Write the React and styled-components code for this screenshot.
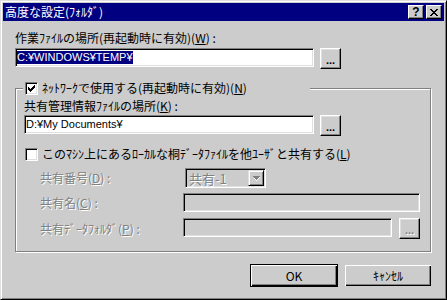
import React from 'react'
import styled, { createGlobalStyle } from 'styled-components'

const GlobalStyle = createGlobalStyle`
  html, body {
    margin: 0;
    padding: 0;
    background: #cccccc;
  }
  body {
    font-family: "Noto Sans CJK JP", "Noto Sans", sans-serif;
    font-size: 12px;
    color: #000;
  }
`

const Window = styled.div`
    box-sizing: border-box;
    width: 447px;
    height: 300px;
    background: #cccccc;
    border: 1px solid;
    border-color: #dfdfdf #000 #000 #dfdfdf;
    box-shadow: inset 1px 1px 0 #fff, inset -1px -1px 0 #808080;
    padding: 2px;
    display: flex;
    flex-direction: column;
`;

const TitleBar = styled.div`
    height: 18px;
    background: #000080;
    color: #fff;
    display: flex;
    align-items: center;
    justify-content: space-between;
    padding: 0 2px;
    line-height: 14px;
`;

const TitleButtons = styled.div`
    display: flex;
    gap: 2px;
`;

const TitleButton = styled.span`
    box-sizing: border-box;
    width: 16px;
    height: 14px;
    background: #cccccc;
    color: #000;
    border: 1px solid;
    border-color: #fff #000 #000 #fff;
    box-shadow: inset -1px -1px 0 #808080;
    display: flex;
    align-items: center;
    justify-content: center;
    font-family: "Liberation Sans", sans-serif;
    font-weight: bold;
    font-size: 12px;
    line-height: 12px;
`;

const Content = styled.div`
    flex: 1;
    padding: 10px 12px 0 12px;
`;

const Label = styled.div`
    line-height: 14px;
    height: 14px;
    white-space: nowrap;
    margin-top: ${p => p.$top || 0}px;
    color: ${p => p.$disabled ? '#808080' : '#000'};
    text-shadow: ${p => p.$disabled ? '1px 1px 0 #fff' : 'none'};
`;

const Key = styled.span`
    text-decoration: underline;
`;

const FieldRow = styled.div`
    display: flex;
    align-items: flex-start;
    gap: ${p => p.$gap || 6}px;
    margin-top: ${p => p.$top || 0}px;
`;

const TextField = styled.div`
    box-sizing: border-box;
    width: ${p => p.$width}px;
    height: 19px;
    background: ${p => p.$disabled ? '#cccccc' : '#fff'};
    border: 1px solid;
    border-color: #808080 #fff #fff #808080;
    box-shadow: inset 1px 1px 0 #000, inset -1px -1px 0 #dfdfdf;
    padding: 0 1px 0 1px;
    display: flex;
    align-items: center;
    white-space: nowrap;
    font-family: "Liberation Sans", sans-serif;
    font-size: 11px;
    line-height: 13px;
`;

const Selected = styled.span`
    background: #000080;
    color: #fff;
    line-height: 13px;
`;

const BrowseButton = styled.span`
    box-sizing: border-box;
    flex: none;
    width: 21px;
    height: 21px;
    background: #cccccc;
    border: 1px solid;
    border-color: #fff #000 #000 #fff;
    box-shadow: inset -1px -1px 0 #808080, inset 1px 1px 0 #dfdfdf;
    display: flex;
    align-items: center;
    justify-content: center;
    font-family: "Liberation Sans", sans-serif;
    font-weight: bold;
    font-size: 11px;
    line-height: 10px;
    padding-top: 2px;
    color: ${p => p.$disabled ? '#808080' : '#000'};
    text-shadow: ${p => p.$disabled ? '1px 1px 0 #fff' : 'none'};
`;

const GroupBox = styled.div`
    box-sizing: border-box;
    width: 416px;
    margin-top: 19px;
    border: 1px solid #808080;
    box-shadow: inset 1px 1px 0 #fff, 1px 1px 0 #fff;
    padding: 0 0 12px 8px;
`;

// sits over the group's top border, like a fieldset legend
const GroupLegend = styled.div`
    box-sizing: border-box;
    width: 287px;
    height: 14px;
    margin: -8px 0 0 -1px;
    padding-left: 2px;
    background: #cccccc;
    display: flex;
    align-items: center;
    gap: 4px;
    line-height: 14px;
    white-space: nowrap;
`;

const CheckRow = styled.div`
    display: flex;
    align-items: center;
    gap: 4px;
    height: 14px;
    line-height: 14px;
    margin: 11px 0 0 1px;
    white-space: nowrap;
`;

const CheckBox = styled.span`
    box-sizing: border-box;
    flex: none;
    width: 13px;
    height: 13px;
    background: #fff;
    border: 1px solid;
    border-color: #808080 #fff #fff #808080;
    box-shadow: inset 1px 1px 0 #000, inset -1px -1px 0 #dfdfdf;
    display: flex;
    align-items: center;
    justify-content: center;
`;

const SharedGrid = styled.div`
    display: grid;
    grid-template-columns: 143px auto;
    grid-template-rows: 20px 20px 21px;
    row-gap: 5px;
    margin: 7px 0 0 16px;
    align-items: start;
`;

const GridLabel = styled(Label)`
    align-self: center;
`;

const Combo = styled.div`
    box-sizing: border-box;
    width: 81px;
    height: 20px;
    margin-left: 2px;
    border: 1px solid;
    border-color: #808080 #fff #fff #808080;
    box-shadow: inset 1px 1px 0 #000, inset -1px -1px 0 #dfdfdf;
    display: flex;
    align-items: center;
    justify-content: space-between;
    padding: 0 1px 0 3px;
    color: #808080;
    text-shadow: 1px 1px 0 #fff;
    font-size: 13px;
`;

const ComboArrow = styled.span`
    box-sizing: border-box;
    width: 16px;
    height: 16px;
    background: #cccccc;
    border: 1px solid;
    border-color: #dfdfdf #000 #000 #dfdfdf;
    box-shadow: inset 1px 1px 0 #fff, inset -1px -1px 0 #808080;
    display: flex;
    align-items: center;
    justify-content: center;
`;

const ButtonBar = styled.div`
    display: flex;
    justify-content: flex-end;
    gap: 6px;
    margin: 12px 0 0 0;
`;

const PushButton = styled.span`
    box-sizing: border-box;
    width: 88px;
    height: 23px;
    background: #cccccc;
    border: 1px solid ${p => p.$default ? '#000' : '#cccccc'};
    box-shadow: inset 1px 1px 0 #fff, inset -1px -1px 0 #000, inset -2px -2px 0 #808080;
    display: flex;
    align-items: center;
    justify-content: center;
    line-height: 14px;
`;

const Check = ({ checked }) => (
    <CheckBox>
        {checked && (
            <svg width="7" height="7" viewBox="0 0 7 7" shapeRendering="crispEdges">
                <path d="M0 2h1v1h1v1h1V3h1V2h1V1h1V0h1v3H6v1H5v1H4v1H3v1H2V6H1V5H0z" fill="#000" />
            </svg>
        )}
    </CheckBox>
)

const App = () => {
    return (
        <>
            <GlobalStyle />
            <Window>
                <TitleBar>
                    <span>高度な設定(ﾌｫﾙﾀﾞ)</span>
                    <TitleButtons>
                        <TitleButton>?</TitleButton>
                        <TitleButton>
                            <svg width="8" height="7" viewBox="0 0 8 7" shapeRendering="crispEdges">
                                <path d="M0 0h2v1h1v1h2V1h1V0h2v1H7v1H6v1H5v1h1v1h1v1h1v1H6V6H5V5H3v1H2v1H0V6h1V5h1V4h1V3H2V2H1V1H0z" fill="#000" />
                            </svg>
                        </TitleButton>
                    </TitleButtons>
                </TitleBar>
                <Content>
                    <Label>作業ﾌｧｲﾙの場所(再起動時に有効)(<Key>W</Key>) :</Label>
                    <FieldRow $top={3}>
                        <TextField $width={299}><Selected>C:¥WINDOWS¥TEMP¥</Selected></TextField>
                        <BrowseButton>...</BrowseButton>
                    </FieldRow>

                    <GroupBox>
                        <GroupLegend>
                            <Check checked />
                            <span>ﾈｯﾄﾜｰｸで使用する(再起動時に有効)(<Key>N</Key>)</span>
                        </GroupLegend>
                        <Label $top={4}>共有管理情報ﾌｧｲﾙの場所(<Key>K</Key>) :</Label>
                        <FieldRow $top={2}>
                            <TextField $width={290}>D:¥My Documents¥</TextField>
                            <BrowseButton>...</BrowseButton>
                        </FieldRow>
                        <CheckRow>
                            <Check />
                            <span>このﾏｼﾝ上にあるﾛｰｶﾙな桐ﾃﾞｰﾀﾌｧｲﾙを他ﾕｰｻﾞと共有する(<Key>L</Key>)</span>
                        </CheckRow>
                        <SharedGrid>
                            <GridLabel $disabled>共有番号(<Key>D</Key>) :</GridLabel>
                            <Combo>
                                <span>共有-1</span>
                                <ComboArrow>
                                    <svg width="7" height="5" viewBox="0 0 7 5" shapeRendering="crispEdges">
                                        <path d="M1 1h6v1H6v1H5v1H4v1H3V4H2V3H1z" fill="#fff" />
                                        <path d="M0 0h7v1H6v1H5v1H4v1H3V3H2V2H1V1H0z" fill="#808080" />
                                    </svg>
                                </ComboArrow>
                            </Combo>
                            <GridLabel $disabled>共有名(<Key>C</Key>) :</GridLabel>
                            <TextField $disabled $width={237} />
                            <GridLabel $disabled>共有ﾃﾞｰﾀﾌｫﾙﾀﾞ(<Key>P</Key>) :</GridLabel>
                            <FieldRow $gap={7}>
                                <TextField $disabled $width={209} />
                                <BrowseButton $disabled>...</BrowseButton>
                            </FieldRow>
                        </SharedGrid>
                    </GroupBox>

                    <ButtonBar>
                        <PushButton $default>OK</PushButton>
                        <PushButton>ｷｬﾝｾﾙ</PushButton>
                    </ButtonBar>
                </Content>
            </Window>
        </>
    )
}

export default App;
